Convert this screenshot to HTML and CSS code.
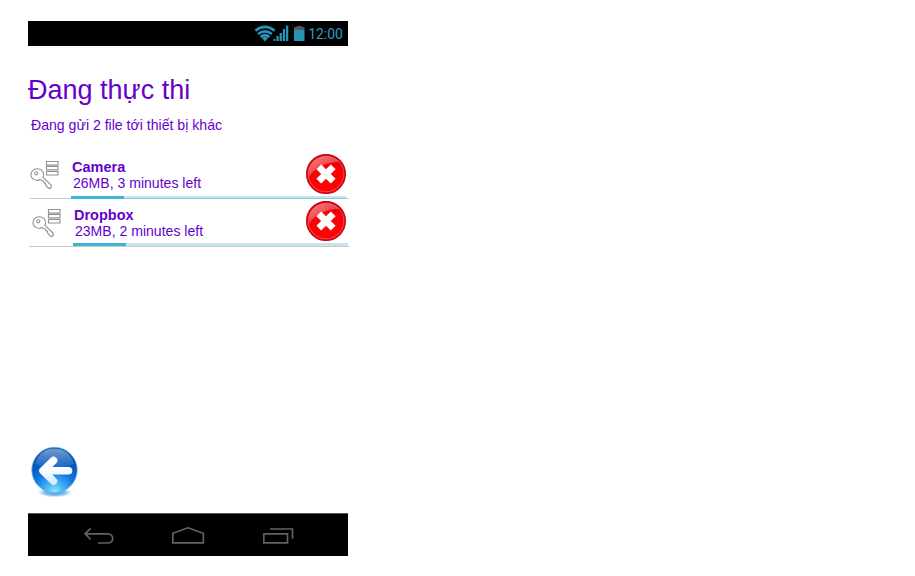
FILE: index.html
```html
<!DOCTYPE html>
<html lang="vi">
<head>
<meta charset="utf-8">
<title>Đang thực thi</title>
<link rel="stylesheet" href="styles.css">
</head>
<body>
<svg class="defs" width="0" height="0" aria-hidden="true">
  <defs>
    <radialGradient id="red" cx=".5" cy=".65" r=".6"><stop offset="0" stop-color="#ff0505"/><stop offset=".7" stop-color="#f80006"/><stop offset="1" stop-color="#dc0009"/></radialGradient>
    <linearGradient id="redgloss" x1="0" y1="0" x2=".8" y2="1"><stop offset="0" stop-color="#fff" stop-opacity=".55"/><stop offset="1" stop-color="#fff" stop-opacity=".05"/></linearGradient>
    <linearGradient id="gloss" x1="0" y1="0" x2="0" y2="1"><stop offset="0" stop-color="#fff" stop-opacity=".55"/><stop offset="1" stop-color="#fff" stop-opacity=".08"/></linearGradient>
    <radialGradient id="blue" cx=".5" cy=".98" r="1"><stop offset="0" stop-color="#8ee8ff"/><stop offset=".2" stop-color="#45b4f7"/><stop offset=".45" stop-color="#1278e0"/><stop offset=".7" stop-color="#0857bd"/><stop offset="1" stop-color="#0a4ba5"/></radialGradient>
    <radialGradient id="shade"><stop offset="0" stop-color="#3f9fdf"/><stop offset=".6" stop-color="#7cc2ea"/><stop offset="1" stop-color="#b9e2fa" stop-opacity="0"/></radialGradient>
    <linearGradient id="arrow" x1="0" y1="0" x2="0" y2="1"><stop offset=".4" stop-color="#fff"/><stop offset="1" stop-color="#dcecff"/></linearGradient>
    <symbol id="key" viewBox="0 0 30 30">
      <g fill="#fff" stroke="#929292" stroke-width="1.100">
        <path d="M12.800 17.200l7.200 6.800c1.300 1.200 1.700 2.700.9 3.700-.8 1-2.200.8-3.200-.2l-2-2.300-.2-2-1.600-.4-.3-1.500-1.700-.5-1.800-1.200C6.800 21.500 1 19.400 1 14.700 1 11.200 3.700 8.700 7.300 8.700c3.600 0 6.300 2.500 6.300 5.900 0 .9-.2 1.800-.8 2.600z"/>
        <circle cx="6.300" cy="13.300" r="1.600"/>
        <path d="M16.500 1.500h11.500v3.500H16.500zM16.500 6.400h11.500v3.500H16.500zM16.500 11.500h11.500v3.500H16.500z"/>
      </g>
    </symbol>
    <symbol id="cancel" viewBox="0 0 40 40">
      <circle cx="20" cy="20" r="19.400" fill="url(#red)" stroke="#c00810" stroke-width="1.200"/>
      <circle cx="20" cy="20" r="17.800" fill="none" stroke="#ff7b7b" stroke-width=".8" opacity=".7"/>
      <path d="M2.500 23C1.500 10 10 2.500 20 2.500c6 0 10 2 13 5.500C20 8 9 14 2.500 23z" fill="url(#redgloss)"/>
      <path d="M12.800 12.800l14.400 14.400M27.200 12.800L12.800 27.200" stroke="#fff" stroke-width="6.800"/>
    </symbol>
  </defs>
</svg>
<main class="phone">
  <header class="status">
    <svg class="signals" width="52" height="17" viewBox="0 0 52 17" fill="#2795b8">
      <path d="M11 16.500L7.900 13q3.100-2.200 6.200 0z"/>
      <g fill="none" stroke="#2795b8" stroke-width="2.700"><path d="M1.400 5.700q9.600-7.600 19.200 0M4.100 9q6.900-5.400 13.800 0M6.600 12q4.400-3.500 8.800 0"/></g>
      <path d="M19.500 14h2v2h-2zM22.400 11h2.300v5h-2.300zM25.600 8h2.300v8h-2.300zM28.800 4h2.300v12h-2.300zM32 .500h2.300V16H32z"/>
      <path d="M40 5h10.500v11H40z"/><path d="M42.500 1h5.500v1h2.500v3H40V2h2.500z" fill="#54585c"/>
    </svg>
    <span class="clock">12:00</span>
  </header>
  <h1>Đang thực thi</h1>
  <p class="subtitle">Đang gửi 2 file tới thiết bị khác</p>
  <ul class="transfers">
    <li class="transfer">
      <div class="info">
        <svg class="key"><use href="#key"/></svg>
        <div class="text"><strong>Camera</strong><span>26MB, 3 minutes left</span></div>
        <button class="cancel" aria-label="Camera"><svg><use href="#cancel"/></svg></button>
      </div>
      <div class="line"><div class="track"><div class="fill"></div></div></div>
    </li>
    <li class="transfer shifted">
      <div class="info">
        <svg class="key"><use href="#key"/></svg>
        <div class="text"><strong>Dropbox</strong><span>23MB, 2 minutes left</span></div>
        <button class="cancel" aria-label="Dropbox"><svg><use href="#cancel"/></svg></button>
      </div>
      <div class="line"><div class="track"><div class="fill"></div></div></div>
    </li>
  </ul>
  <button class="back" aria-label="Back">
    <svg width="50" height="54" viewBox="0 0 50 54">
      <ellipse cx="25" cy="46.500" rx="18" ry="5" fill="url(#shade)"/>
      <circle cx="24.500" cy="24" r="22.700" fill="url(#blue)" stroke="#69aee8" stroke-width=".8"/>
      <path d="M5 18C8 8 15 2.500 24.500 2.500S41 8 44 18C34 22 15 22 5 18z" fill="url(#gloss)" opacity=".8"/>
      <path d="M23.500 14.500L13 24.800l10.500 10.300M14 24.800h24.500" fill="none" stroke="url(#arrow)" stroke-width="7.600" stroke-linecap="round" stroke-linejoin="round"/>
    </svg>
  </button>
  <nav class="nav">
    <svg width="320" height="42" viewBox="0 0 320 42" fill="none" stroke="#626262" stroke-width="1.700">
      <path d="M62.500 14.300l-5.300 5.500 5.300 5.500M57.500 19.800h22.300c6.500 0 6.500 9.200 0 9.200H70"/>
      <path d="M144.800 28.900v-9.600L160 13.800l15.300 5.500v9.600z"/>
      <path d="M235.800 19.900h23.700v9h-23.700zM242 15h22.500v9.700"/>
    </svg>
  </nav>
</main>
</body>
</html>
```
FILE: styles.css
```css
* { box-sizing: border-box; }
body { margin: 0; background: #fff; font-family: "Liberation Sans", Arial, sans-serif; color: #60c; }
.defs { display: block; }
.phone { display: flex; flex-direction: column; width: 320px; height: 535px; margin: 21px 0 0 28px; }
.status { display: flex; align-items: center; justify-content: flex-end; height: 25px; padding-right: 5px; background: #000; }
.signals { margin-right: 2px; }
.clock { font: 14px/25px Roboto, sans-serif; color: #2b9dc3; padding-top: 1px; }
h1 { margin: 28px 0 0; font-size: 27px; line-height: 32px; font-weight: 400; white-space: nowrap; }
.subtitle { margin: 11px 0 0 3px; font-size: 14.100px; line-height: 16px; white-space: nowrap; }
.transfers { list-style: none; margin: 18px -1px 0 0; padding: 0; }
.transfer { height: 48px; padding-left: 2px; }
.info { display: flex; height: 45px; padding-right: 3px; }
.key { width: 30px; height: 30px; margin-top: 9px; flex: none; }
.text { display: flex; flex-direction: column; flex: 1; margin: 8px 0 0 12px; font-size: 14.500px; line-height: 16px; white-space: nowrap; }
.text span { padding-left: 1px; font-size: 14.060px; }
button { border: 0; padding: 0; background: none; }
.cancel { width: 40px; height: 40px; margin-top: 3px; flex: none; }
.cancel svg { display: block; width: 40px; height: 40px; }
.line { height: 3px; padding: 0 3px 0 41px; border-bottom: 1px solid #c9c9c9; }
.track { height: 3px; background: #c5e6ef; border-bottom: 1px solid #91c5dc; }
.fill { width: 53px; height: 3px; background: #3fb3d7; }
.shifted { padding-left: 1px; }
.shifted .info { height: 44px; padding-left: 3px; }
.shifted .cancel { margin-top: 2px; }
.shifted .line { height: 4px; padding: 0 1px 0 44px; }
.shifted .track { border-bottom: 0; }
.back { width: 50px; height: 54px; margin: auto 0 13px 2px; }
.back svg { display: block; }
.nav { height: 43px; background: #000; border-top: 1px solid #555; }
.nav svg { display: block; }
```
